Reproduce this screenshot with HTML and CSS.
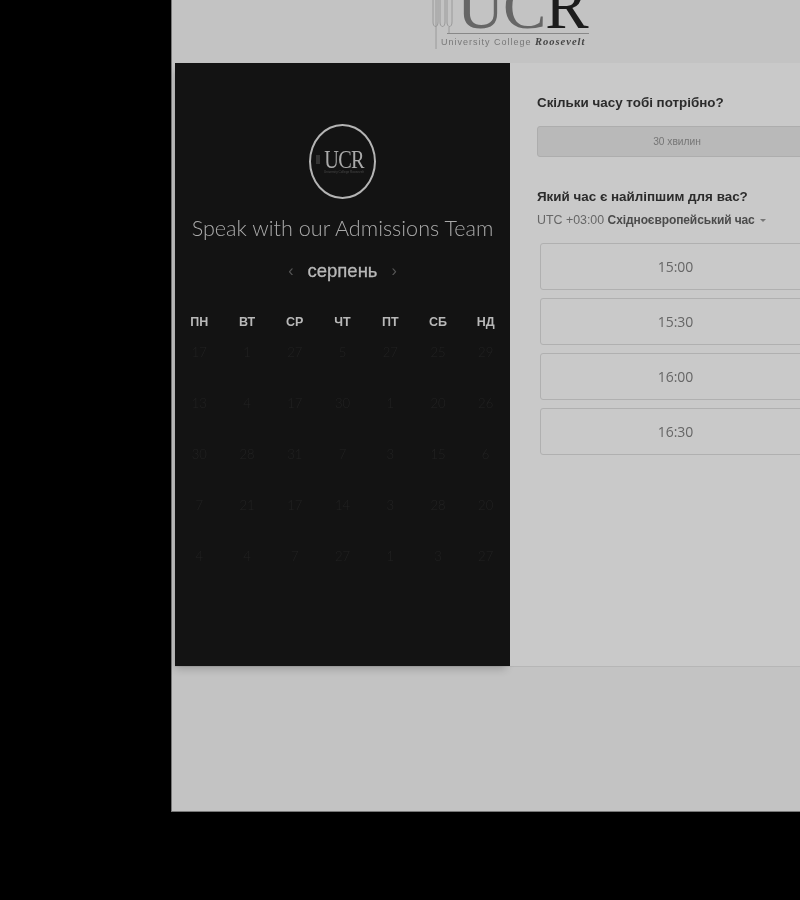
FILE: index.html
```html
<!DOCTYPE html>
<html lang="uk">
<head>
    <meta charset="UTF-8">
    <meta name="viewport" content="width=device-width, initial-scale=1.0">
    <title>Speak with our Admissions Team</title>
    <link rel="stylesheet" href="styles.css">
</head>
<body>
    <div class="page">
        <header class="top">
            <div class="logo">
                <svg class="logo-mark" width="24" height="70" viewBox="0 0 24 70" fill="none" stroke="#8f8f8f" stroke-width="0.8">
                    <path d="M4 69V17M1 17V42c0 6 5 6 5 0V17M8 17V42c0 6 5 6 5 0V17M15 17V42c0 6 5 6 5 0V17M17 47V54"/>
                </svg>
                <div class="logo-text">
                    <div class="logo-letters">UC<b>R</b></div>
                    <div class="logo-name">University College <em>Roosevelt</em></div>
                </div>
            </div>
        </header>

        <main class="scheduler">
            <section class="calendar">
                <div class="badge">
                    <span class="badge-mark"></span>
                    <span class="badge-text">UCR<small>University College Roosevelt</small></span>
                </div>
                <h1 class="title">Speak with our Admissions Team</h1>
                <div class="month">
                    <span class="arrow">‹</span>
                    <span class="month-name">серпень</span>
                    <span class="arrow">›</span>
                </div>
                <div class="days">
                    <div class="day-name">ПН</div><div class="day-name">ВТ</div><div class="day-name">СР</div><div class="day-name">ЧТ</div><div class="day-name">ПТ</div><div class="day-name">СБ</div><div class="day-name">НД</div>
                    <div class="day">17</div><div class="day">1</div><div class="day">27</div><div class="day">5</div><div class="day">27</div><div class="day">25</div><div class="day">29</div>
                    <div class="day">13</div><div class="day">4</div><div class="day">17</div><div class="day">30</div><div class="day">1</div><div class="day">20</div><div class="day">26</div>
                    <div class="day">30</div><div class="day">28</div><div class="day">31</div><div class="day">7</div><div class="day">3</div><div class="day">15</div><div class="day">6</div>
                    <div class="day">7</div><div class="day">21</div><div class="day">17</div><div class="day">14</div><div class="day">3</div><div class="day">28</div><div class="day">20</div>
                    <div class="day">4</div><div class="day">4</div><div class="day">7</div><div class="day">27</div><div class="day">1</div><div class="day">3</div><div class="day">27</div>
                </div>
            </section>

            <section class="details">
                <h2 class="question">Скільки часу тобі потрібно?</h2>
                <button class="duration">30 хвилин</button>
                <h2 class="question second">Який час є найліпшим для вас?</h2>
                <div class="timezone">UTC +03:00 <b>Східноєвропейський час</b><span class="caret"></span></div>
                <div class="slots">
                    <button class="slot">15:00</button>
                    <button class="slot">15:30</button>
                    <button class="slot">16:00</button>
                    <button class="slot">16:30</button>
                </div>
            </section>
        </main>
    </div>
</body>
</html>
```

FILE: styles.css
```css
* {
    margin: 0;
    padding: 0;
    box-sizing: border-box;
}

html, body {
    height: 900px;
    overflow: hidden;
}

body {
    background: #000;
    font-family: "Liberation Sans", Arial, sans-serif;
}

.page {
    width: 700px;
    height: 812px;
    margin-left: 171px;
    background: #c3c3c3;
    border-left: 1px solid #777;
    border-bottom: 1px solid #777;
    filter: blur(0.45px);
}

.top {
    height: 63px;
    display: flex;
    align-items: flex-end;
    padding-left: 260px;
    padding-bottom: 13px;
}

.logo {
    display: flex;
    align-items: flex-end;
    height: 46px;
}

.logo-mark {
    flex: none;
}

.logo-text {
    margin-left: -15px;
    width: 148px;
    flex: none;
}

.logo-letters {
    font-family: "Liberation Serif", serif;
    font-size: 65px;
    font-weight: normal;
    line-height: 5px;
    height: 30px;
    margin-left: 6px;
    padding-left: 10px;
    color: #666;
    border-bottom: 1px solid #888;
    letter-spacing: -1px;
    white-space: nowrap;
}

.logo-letters b {
    font-weight: normal;
    color: #1c1c1c;
}

.logo-name {
    font-size: 9px;
    line-height: 16px;
    letter-spacing: 1px;
    color: #777;
    white-space: nowrap;
}

.logo-name em {
    font-family: "Liberation Serif", serif;
    font-weight: bold;
    font-size: 10.5px;
    color: #444;
}

.scheduler {
    display: flex;
    margin-left: 3px;
    height: 604px;
    background: #c9c9c9;
    border-bottom: 1px solid #b6b6b6;
}

.calendar {
    width: 335px;
    flex: none;
    background: #131313;
    display: flex;
    flex-direction: column;
    align-items: center;
    padding-top: 61px;
    box-shadow: -2px 5px 8px -2px rgba(0, 0, 0, 0.2);
}

.badge {
    width: 67px;
    height: 75px;
    border: 2.5px solid #b4b4b4;
    border-radius: 50%;
    display: flex;
    justify-content: center;
    align-items: center;
    flex: none;
    padding-left: 4px;
}

.badge-mark {
    width: 4px;
    height: 9px;
    margin: -4px -2px 0 -4px;
    background: #333;
    flex: none;
}

.badge-text {
    font-family: "Liberation Serif", serif;
    font-size: 26px;
    line-height: 22px;
    color: #aaa;
    display: block;
    text-align: center;
    transform: scaleX(0.78);
    letter-spacing: -1px;
    width: 52px;
}

.badge-text small {
    display: block;
    font-family: "Liberation Sans", Arial, sans-serif;
    font-size: 4px;
    line-height: 5px;
    margin-top: -2px;
    letter-spacing: 0;
    color: #4a4a4a;
    white-space: nowrap;
}

.title {
    font-family: Lato, sans-serif;
    font-weight: 300;
    font-size: 21.6px;
    line-height: 30px;
    margin-top: 14px;
    color: #aaa;
    white-space: nowrap;
}

.month {
    display: flex;
    align-items: center;
    margin-top: 13px;
    height: 30px;
    color: #b8b8b8;
}

.month-name {
    font-size: 18.5px;
    margin: 0 14px;
    -webkit-text-stroke: 0.3px #b8b8b8;
}

.arrow {
    font-size: 16px;
    color: #555;
}

.days {
    width: 334px;
    display: grid;
    grid-template-columns: repeat(7, 1fr);
    grid-template-rows: 30px;
    grid-auto-rows: 51px;
    margin-top: 26px;
    text-align: center;
}

.day-name {
    font-size: 12.5px;
    font-weight: bold;
    line-height: 20px;
    color: #b8b8b8;
}

.day {
    font-family: Lato, sans-serif;
    font-weight: 300;
    font-size: 13px;
    line-height: 20px;
    color: #222;
}

.details {
    flex: none;
    width: 320px;
    background: #c9c9c9;
    padding: 31px 0 0 27px;
}

.question {
    font-size: 13.4px;
    font-weight: bold;
    line-height: 18px;
    color: #2b2b2b;
}

.duration {
    display: block;
    width: 280px;
    height: 31px;
    margin-top: 14px;
    background: #b9b9b9;
    border: 1px solid #adadad;
    border-radius: 3px;
    font-family: inherit;
    font-size: 10.2px;
    color: #757575;
}

.second {
    margin-top: 31px;
}

.timezone {
    margin-top: 5px;
    font-size: 12.4px;
    line-height: 18px;
    color: #666;
    white-space: nowrap;
}

.timezone b {
    font-size: 12px;
    letter-spacing: -0.1px;
    color: #4b4b4b;
}

.caret {
    display: inline-block;
    margin-left: 5px;
    vertical-align: 2px;
    border-left: 3.5px solid transparent;
    border-right: 3.5px solid transparent;
    border-top: 3.5px solid #777;
}

.slots {
    display: flex;
    flex-direction: column;
    gap: 8px;
    width: 271px;
    margin: 14px 0 0 3px;
}

.slot {
    height: 47px;
    background: #c9c9c9;
    border: 1px solid #b0b0b0;
    border-radius: 3px;
    font-family: "Open Sans", sans-serif;
    font-size: 14px;
    color: #666;
}
```
